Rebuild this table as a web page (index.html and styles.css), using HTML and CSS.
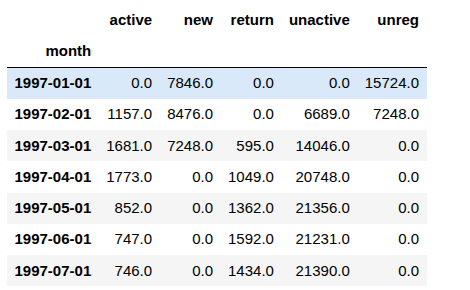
FILE: index.html
```html
<!DOCTYPE html>
<html lang="en">
<head>
    <meta charset="UTF-8">
    <title>DataFrame</title>
    <link rel="stylesheet" href="styles.css">
</head>
<body>

    <div class="output">
        <table class="dataframe">
            <thead>
                <tr>
                    <th></th>
                    <th>active</th>
                    <th>new</th>
                    <th>return</th>
                    <th>unactive</th>
                    <th>unreg</th>
                </tr>
                <tr>
                    <th>month</th>
                    <th></th>
                    <th></th>
                    <th></th>
                    <th></th>
                    <th></th>
                </tr>
            </thead>
            <tbody>
                <tr class="hover">
                    <th>1997-01-01</th>
                    <td>0.0</td>
                    <td>7846.0</td>
                    <td>0.0</td>
                    <td>0.0</td>
                    <td>15724.0</td>
                </tr>
                <tr>
                    <th>1997-02-01</th>
                    <td>1157.0</td>
                    <td>8476.0</td>
                    <td>0.0</td>
                    <td>6689.0</td>
                    <td>7248.0</td>
                </tr>
                <tr>
                    <th>1997-03-01</th>
                    <td>1681.0</td>
                    <td>7248.0</td>
                    <td>595.0</td>
                    <td>14046.0</td>
                    <td>0.0</td>
                </tr>
                <tr>
                    <th>1997-04-01</th>
                    <td>1773.0</td>
                    <td>0.0</td>
                    <td>1049.0</td>
                    <td>20748.0</td>
                    <td>0.0</td>
                </tr>
                <tr>
                    <th>1997-05-01</th>
                    <td>852.0</td>
                    <td>0.0</td>
                    <td>1362.0</td>
                    <td>21356.0</td>
                    <td>0.0</td>
                </tr>
                <tr>
                    <th>1997-06-01</th>
                    <td>747.0</td>
                    <td>0.0</td>
                    <td>1592.0</td>
                    <td>21231.0</td>
                    <td>0.0</td>
                </tr>
                <tr>
                    <th>1997-07-01</th>
                    <td>746.0</td>
                    <td>0.0</td>
                    <td>1434.0</td>
                    <td>21390.0</td>
                    <td>0.0</td>
                </tr>
            </tbody>
        </table>
    </div>

</body>
</html>
```

FILE: styles.css
```css
body {
    background-color: white;
    font-family: 'Liberation Sans', Arial, sans-serif;
    margin: 0;
    padding: 4px 0 0 7px;
}
.dataframe {
    border: none;
    border-collapse: collapse;
    border-spacing: 0;
    color: black;
    font-size: 15px;
}
.dataframe th, .dataframe td {
    text-align: right;
    vertical-align: middle;
    padding: 7.5px;
    line-height: 16.25px;
    white-space: nowrap;
    border: none;
}
.dataframe th {
    font-weight: bold;
}
.dataframe thead {
    border-bottom: 1px solid black;
    vertical-align: bottom;
}
.dataframe tbody tr:nth-child(odd) {
    background: #f5f5f5;
}
/* row under the mouse pointer */
.dataframe tbody tr.hover {
    background: #d9e9f9;
}
```
